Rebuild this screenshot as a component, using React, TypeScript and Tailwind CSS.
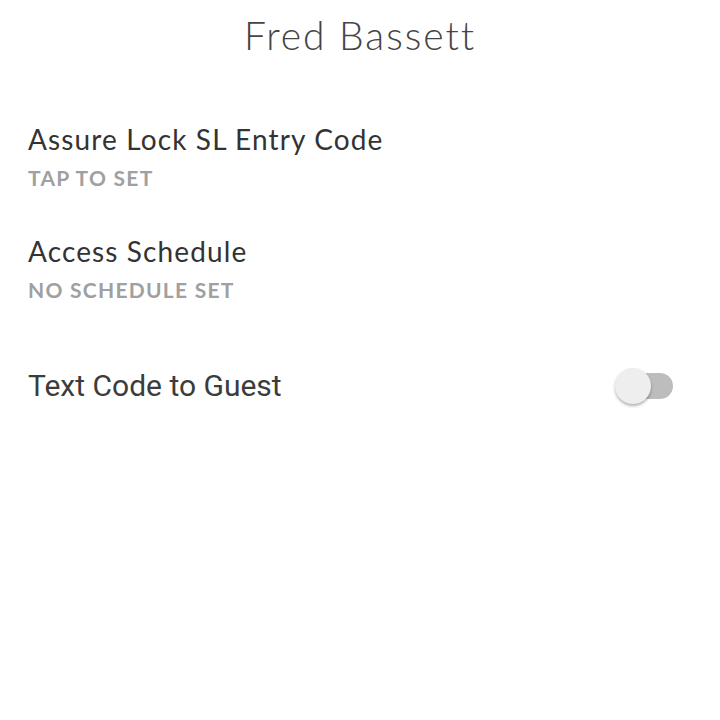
export default function App() {
  return (
    <div className="min-h-[720px] w-[720px] bg-white">
      <div className="pt-[12px] text-center font-['Lato',sans-serif] text-[39px] font-light leading-[46px] tracking-[0.05em] text-[#444]">Fred Bassett</div>
      <div className="px-[28px] pt-[64px]">
        <div className="font-['Lato',sans-serif] text-[28px] leading-[34px] tracking-[0.04em] text-[#333]">Assure Lock SL Entry Code</div>
        <div className="mt-[10px] font-['Lato',sans-serif] text-[21px] font-bold leading-[24px] tracking-[0.06em] text-[#a0a0a0]">TAP TO SET</div>
        <div className="mt-[44px] font-['Lato',sans-serif] text-[28px] leading-[34px] tracking-[0.04em] text-[#333]">Access Schedule</div>
        <div className="mt-[10px] font-['Lato',sans-serif] text-[21px] font-bold leading-[24px] tracking-[0.06em] text-[#a0a0a0]">NO SCHEDULE SET</div>
        <div className="mt-[66px] flex items-center justify-between pr-[19px]">
          <span className="font-['Roboto',sans-serif] text-[30px] leading-[34px] text-[#3c3c3c]">Text Code to Guest</span>
          <div className="relative h-[36px] w-[58px]">
            <div className="absolute left-[4px] top-[5px] h-[26px] w-[54px] rounded-full bg-[#bdbdbd]" />
            <div className="absolute left-0 top-0 h-[36px] w-[36px] rounded-full bg-[#eeeeee] shadow-[0_2px_3px_rgba(0,0,0,0.3)]" />
          </div>
        </div>
      </div>
    </div>
  );
}
